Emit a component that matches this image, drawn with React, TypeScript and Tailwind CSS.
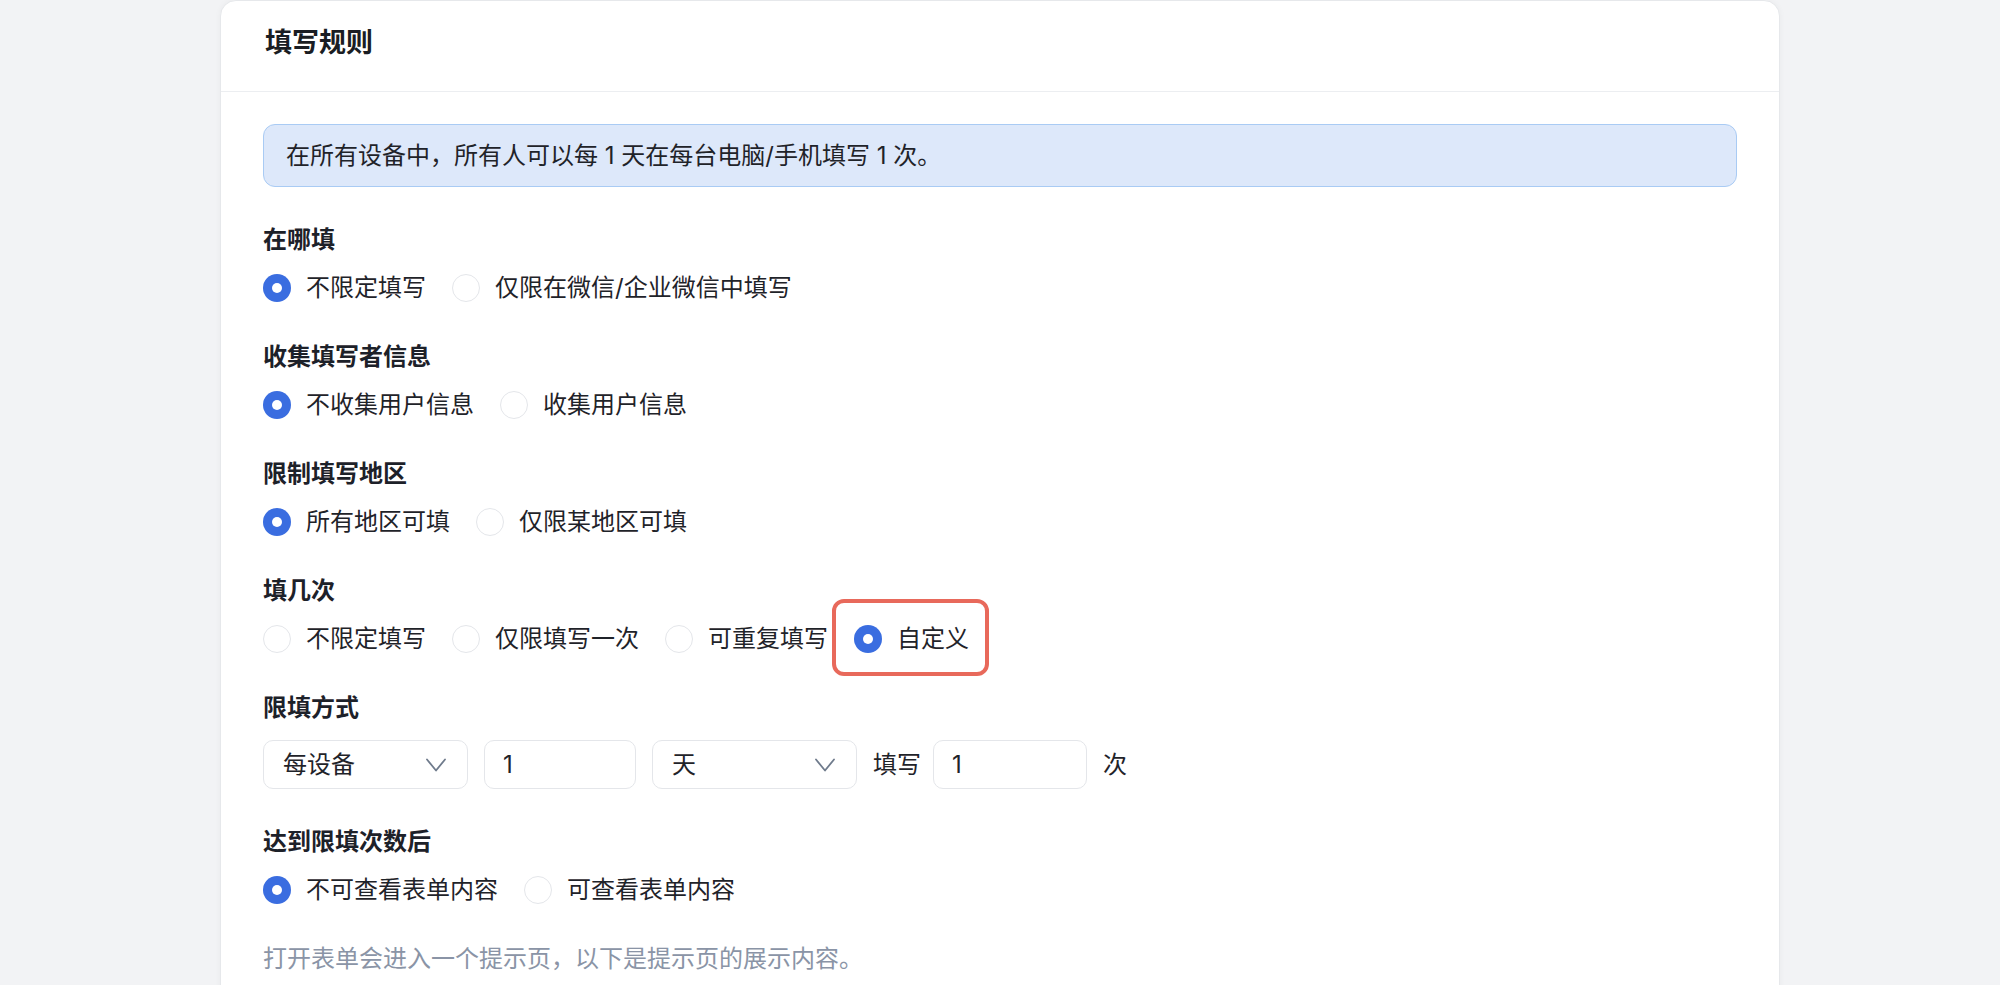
import React from 'react';

type Opt = { label: string; checked?: boolean; marked?: boolean };

function Radio({ label, checked, marked }: Opt) {
  return (
    <label className="relative flex items-center h-8 cursor-pointer">
      {marked && (
        <span className="pointer-events-none absolute -left-[22px] -top-[24px] w-[157px] h-[77px] rounded-[12px] border-[4px] border-[#e8695b]" />
      )}
      {checked ? (
        <span className="w-7 h-7 rounded-full bg-[#3a6de0] flex items-center justify-center">
          <span className="w-[10px] h-[10px] rounded-full bg-white" />
        </span>
      ) : (
        <span className="w-7 h-7 rounded-full border border-[#e4e6ea] bg-white" />
      )}
      <span className="ml-[15px] text-[24px] leading-8 text-[#1f2329]">{label}</span>
    </label>
  );
}

function Section({ title, children }: { title: string; children: React.ReactNode }) {
  return (
    <div className="flex flex-col gap-4">
      <div className="text-[24px] leading-8 font-bold text-[#1d2129]">{title}</div>
      {children}
    </div>
  );
}

function RadioRow({ options }: { options: Opt[] }) {
  return (
    <div className="flex items-center gap-[26px]">
      {options.map((o) => (
        <Radio key={o.label} {...o} />
      ))}
    </div>
  );
}

function Chevron() {
  return (
    <svg width="20" height="14" viewBox="0 0 20 14" fill="none">
      <path d="M1 1.5 L10 12.5 L19 1.5" stroke="#6f7b8c" strokeWidth="1.8" strokeLinecap="round" strokeLinejoin="round" />
    </svg>
  );
}

function Select({ value, width }: { value: string; width: string }) {
  return (
    <div className={`${width} h-[49px] rounded-[10px] border border-[#e4e6ea] bg-white flex items-center justify-between pl-[19px] pr-[21px]`}>
      <span className="text-[24px] text-[#1f2329]">{value}</span>
      <Chevron />
    </div>
  );
}

function NumInput({ value, width }: { value: string; width: string }) {
  return (
    <div className={`${width} h-[49px] rounded-[10px] border border-[#e4e6ea] bg-white flex items-center pl-[18px]`}>
      <span className="text-[24px] text-[#1f2329]">{value}</span>
    </div>
  );
}

export default function App() {
  return (
    <div className="min-h-screen bg-[#f2f3f5] font-['Inter','Noto_Sans_CJK_SC',sans-serif] overflow-hidden">
      <div className="mx-auto w-[1560px] bg-white rounded-2xl border border-[#e6e8eb] shadow-[0_0_6px_rgba(0,0,0,0.04)]">
        {/* header */}
        <div className="h-[91px] flex items-center px-[44px] pb-[5px] border-b border-[#eceef1]">
          <h2 className="text-[27px] font-bold text-[#1a1d23]">填写规则</h2>
        </div>

        <div className="px-[42px] pt-8 pb-10">
          <div className="h-[63px] rounded-xl border border-[#a9cbf4] bg-[#dde8fa] flex items-center px-[22px] mb-[37px]">
            <span className="text-[24px] text-[#1f2329]">在所有设备中，所有人可以每 1 天在每台电脑/手机填写 1 次。</span>
          </div>

          <div className="flex flex-col gap-[37px]">
            <Section title="在哪填">
              <RadioRow options={[{ label: '不限定填写', checked: true }, { label: '仅限在微信/企业微信中填写' }]} />
            </Section>

            <Section title="收集填写者信息">
              <RadioRow options={[{ label: '不收集用户信息', checked: true }, { label: '收集用户信息' }]} />
            </Section>

            <Section title="限制填写地区">
              <RadioRow options={[{ label: '所有地区可填', checked: true }, { label: '仅限某地区可填' }]} />
            </Section>

            <Section title="填几次">
              <RadioRow
                options={[
                  { label: '不限定填写' },
                  { label: '仅限填写一次' },
                  { label: '可重复填写' },
                  { label: '自定义', checked: true, marked: true },
                ]}
              />
            </Section>

            <Section title="限填方式">
              <div className="flex items-center gap-4">
                <Select value="每设备" width="w-[205px]" />
                <NumInput value="1" width="w-[152px]" />
                <Select value="天" width="w-[205px]" />
                <span className="text-[24px] text-[#1f2329] -mr-1">填写</span>
                <NumInput value="1" width="w-[154px]" />
                <span className="text-[24px] text-[#1f2329]">次</span>
              </div>
            </Section>

            <Section title="达到限填次数后">
              <RadioRow options={[{ label: '不可查看表单内容', checked: true }, { label: '可查看表单内容' }]} />
            </Section>

            <div className="text-[24px] leading-8 text-[#8a94a6]">打开表单会进入一个提示页，以下是提示页的展示内容。</div>
          </div>
        </div>
      </div>
    </div>
  );
}
